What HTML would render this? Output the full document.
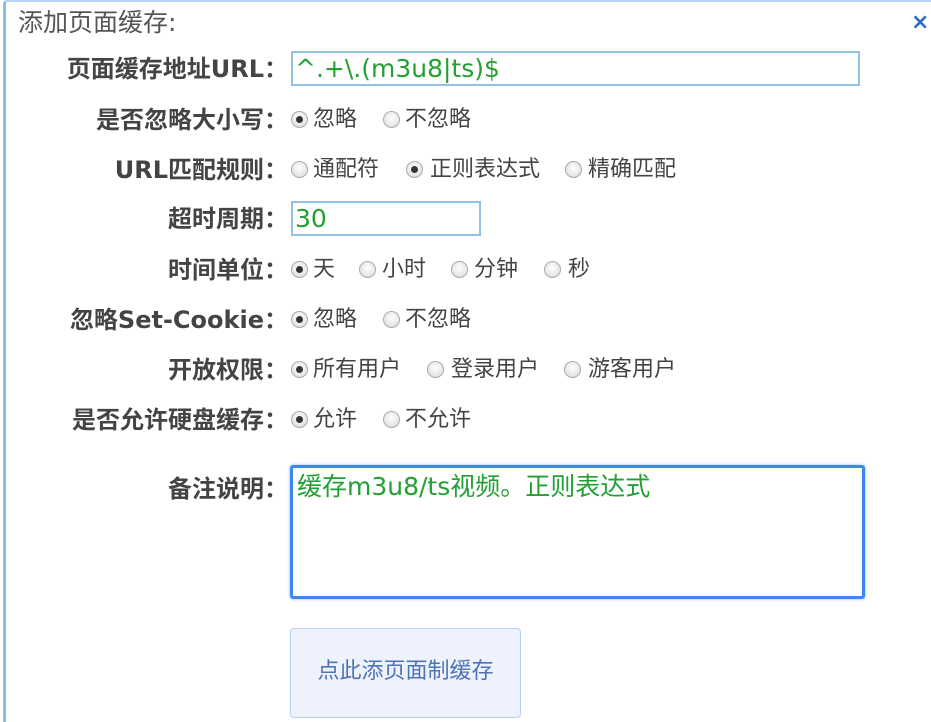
<!DOCTYPE html>
<html><head><meta charset="utf-8"><style>
body{margin:0;width:931px;height:701px;overflow:hidden;background:#fff;font-family:"DejaVu Sans","Noto Sans CJK SC",sans-serif;position:relative}
.frame{position:absolute;left:3px;top:0;width:940px;height:720px;border-left:3px solid #8fbcf0;border-top:2px solid #b5d3f5;border-top-left-radius:4px}
.t{position:absolute;left:18px;top:6px;font-size:25px;color:#555;line-height:34px}
.x{position:absolute;left:911px;top:10px;font-size:22px;color:#2a6ec0;font-weight:bold}
.l{position:absolute;right:643px;font-size:24px;font-weight:bold;color:#444;white-space:nowrap;line-height:30px}
.r{position:absolute;font-size:22px;color:#444;white-space:nowrap;line-height:30px}
.rb{position:absolute;width:17px;height:17px;border-radius:50%;border:1px solid #aaa;background:radial-gradient(circle at 50% 40%,#fff,#d8d8d8);box-sizing:border-box}
.rb.on::after{content:"";position:absolute;left:4px;top:4px;width:7px;height:7px;border-radius:50%;background:#333}
.in{position:absolute;border:2px solid #92c2e0;box-sizing:border-box;color:#22a032;font-size:25px;padding-left:2px;line-height:31px}
.ta{position:absolute;left:290px;top:465px;width:575px;height:134px;border:3px solid #3d86ee;border-radius:3px;box-sizing:border-box;color:#22a032;font-size:25px;line-height:34px;padding:2px 4px;box-shadow:0 0 3px #8ab6f5}
.btn{position:absolute;left:290px;top:628px;width:231px;height:90px;background:#eef2fd;border:1px solid #b7d0f5;border-radius:4px;box-sizing:border-box;color:#4f73b6;font-size:22px;text-align:center;padding-top:24px}
</style></head><body>
<div class="frame"></div>
<div class="t">添加页面缓存:</div>
<div class="x">×</div>

<div class="l" style="top:54px">页面缓存地址URL：</div>
<div class="in" style="left:291px;top:51px;width:569px;height:35px">^.+\.(m3u8|ts)$</div>

<div class="l" style="top:105px">是否忽略大小写：</div>
<div class="rb on" style="left:291px;top:111px"></div><div class="r" style="left:313px;top:105px">忽略</div>
<div class="rb" style="left:383px;top:111px"></div><div class="r" style="left:405px;top:105px">不忽略</div>

<div class="l" style="top:155px">URL匹配规则：</div>
<div class="rb" style="left:291px;top:161px"></div><div class="r" style="left:313px;top:155px">通配符</div>
<div class="rb on" style="left:406px;top:161px"></div><div class="r" style="left:430px;top:155px">正则表达式</div>
<div class="rb" style="left:565px;top:161px"></div><div class="r" style="left:588px;top:155px">精确匹配</div>

<div class="l" style="top:204px">超时周期：</div>
<div class="in" style="left:291px;top:201px;width:190px;height:35px">30</div>

<div class="l" style="top:255px">时间单位：</div>
<div class="rb on" style="left:291px;top:261px"></div><div class="r" style="left:313px;top:255px">天</div>
<div class="rb" style="left:359px;top:261px"></div><div class="r" style="left:382px;top:255px">小时</div>
<div class="rb" style="left:451px;top:261px"></div><div class="r" style="left:474px;top:255px">分钟</div>
<div class="rb" style="left:544px;top:261px"></div><div class="r" style="left:568px;top:255px">秒</div>

<div class="l" style="top:305px">忽略Set-Cookie：</div>
<div class="rb on" style="left:291px;top:311px"></div><div class="r" style="left:313px;top:305px">忽略</div>
<div class="rb" style="left:383px;top:311px"></div><div class="r" style="left:405px;top:305px">不忽略</div>

<div class="l" style="top:355px">开放权限：</div>
<div class="rb on" style="left:291px;top:361px"></div><div class="r" style="left:313px;top:355px">所有用户</div>
<div class="rb" style="left:427px;top:361px"></div><div class="r" style="left:451px;top:355px">登录用户</div>
<div class="rb" style="left:564px;top:361px"></div><div class="r" style="left:588px;top:355px">游客用户</div>

<div class="l" style="top:405px">是否允许硬盘缓存：</div>
<div class="rb on" style="left:291px;top:411px"></div><div class="r" style="left:313px;top:405px">允许</div>
<div class="rb" style="left:383px;top:411px"></div><div class="r" style="left:405px;top:405px">不允许</div>

<div class="l" style="top:474px">备注说明：</div>
<div class="ta">缓存m3u8/ts视频。正则表达式</div>

<div class="btn">点此添页面制缓存</div>
</body></html>
